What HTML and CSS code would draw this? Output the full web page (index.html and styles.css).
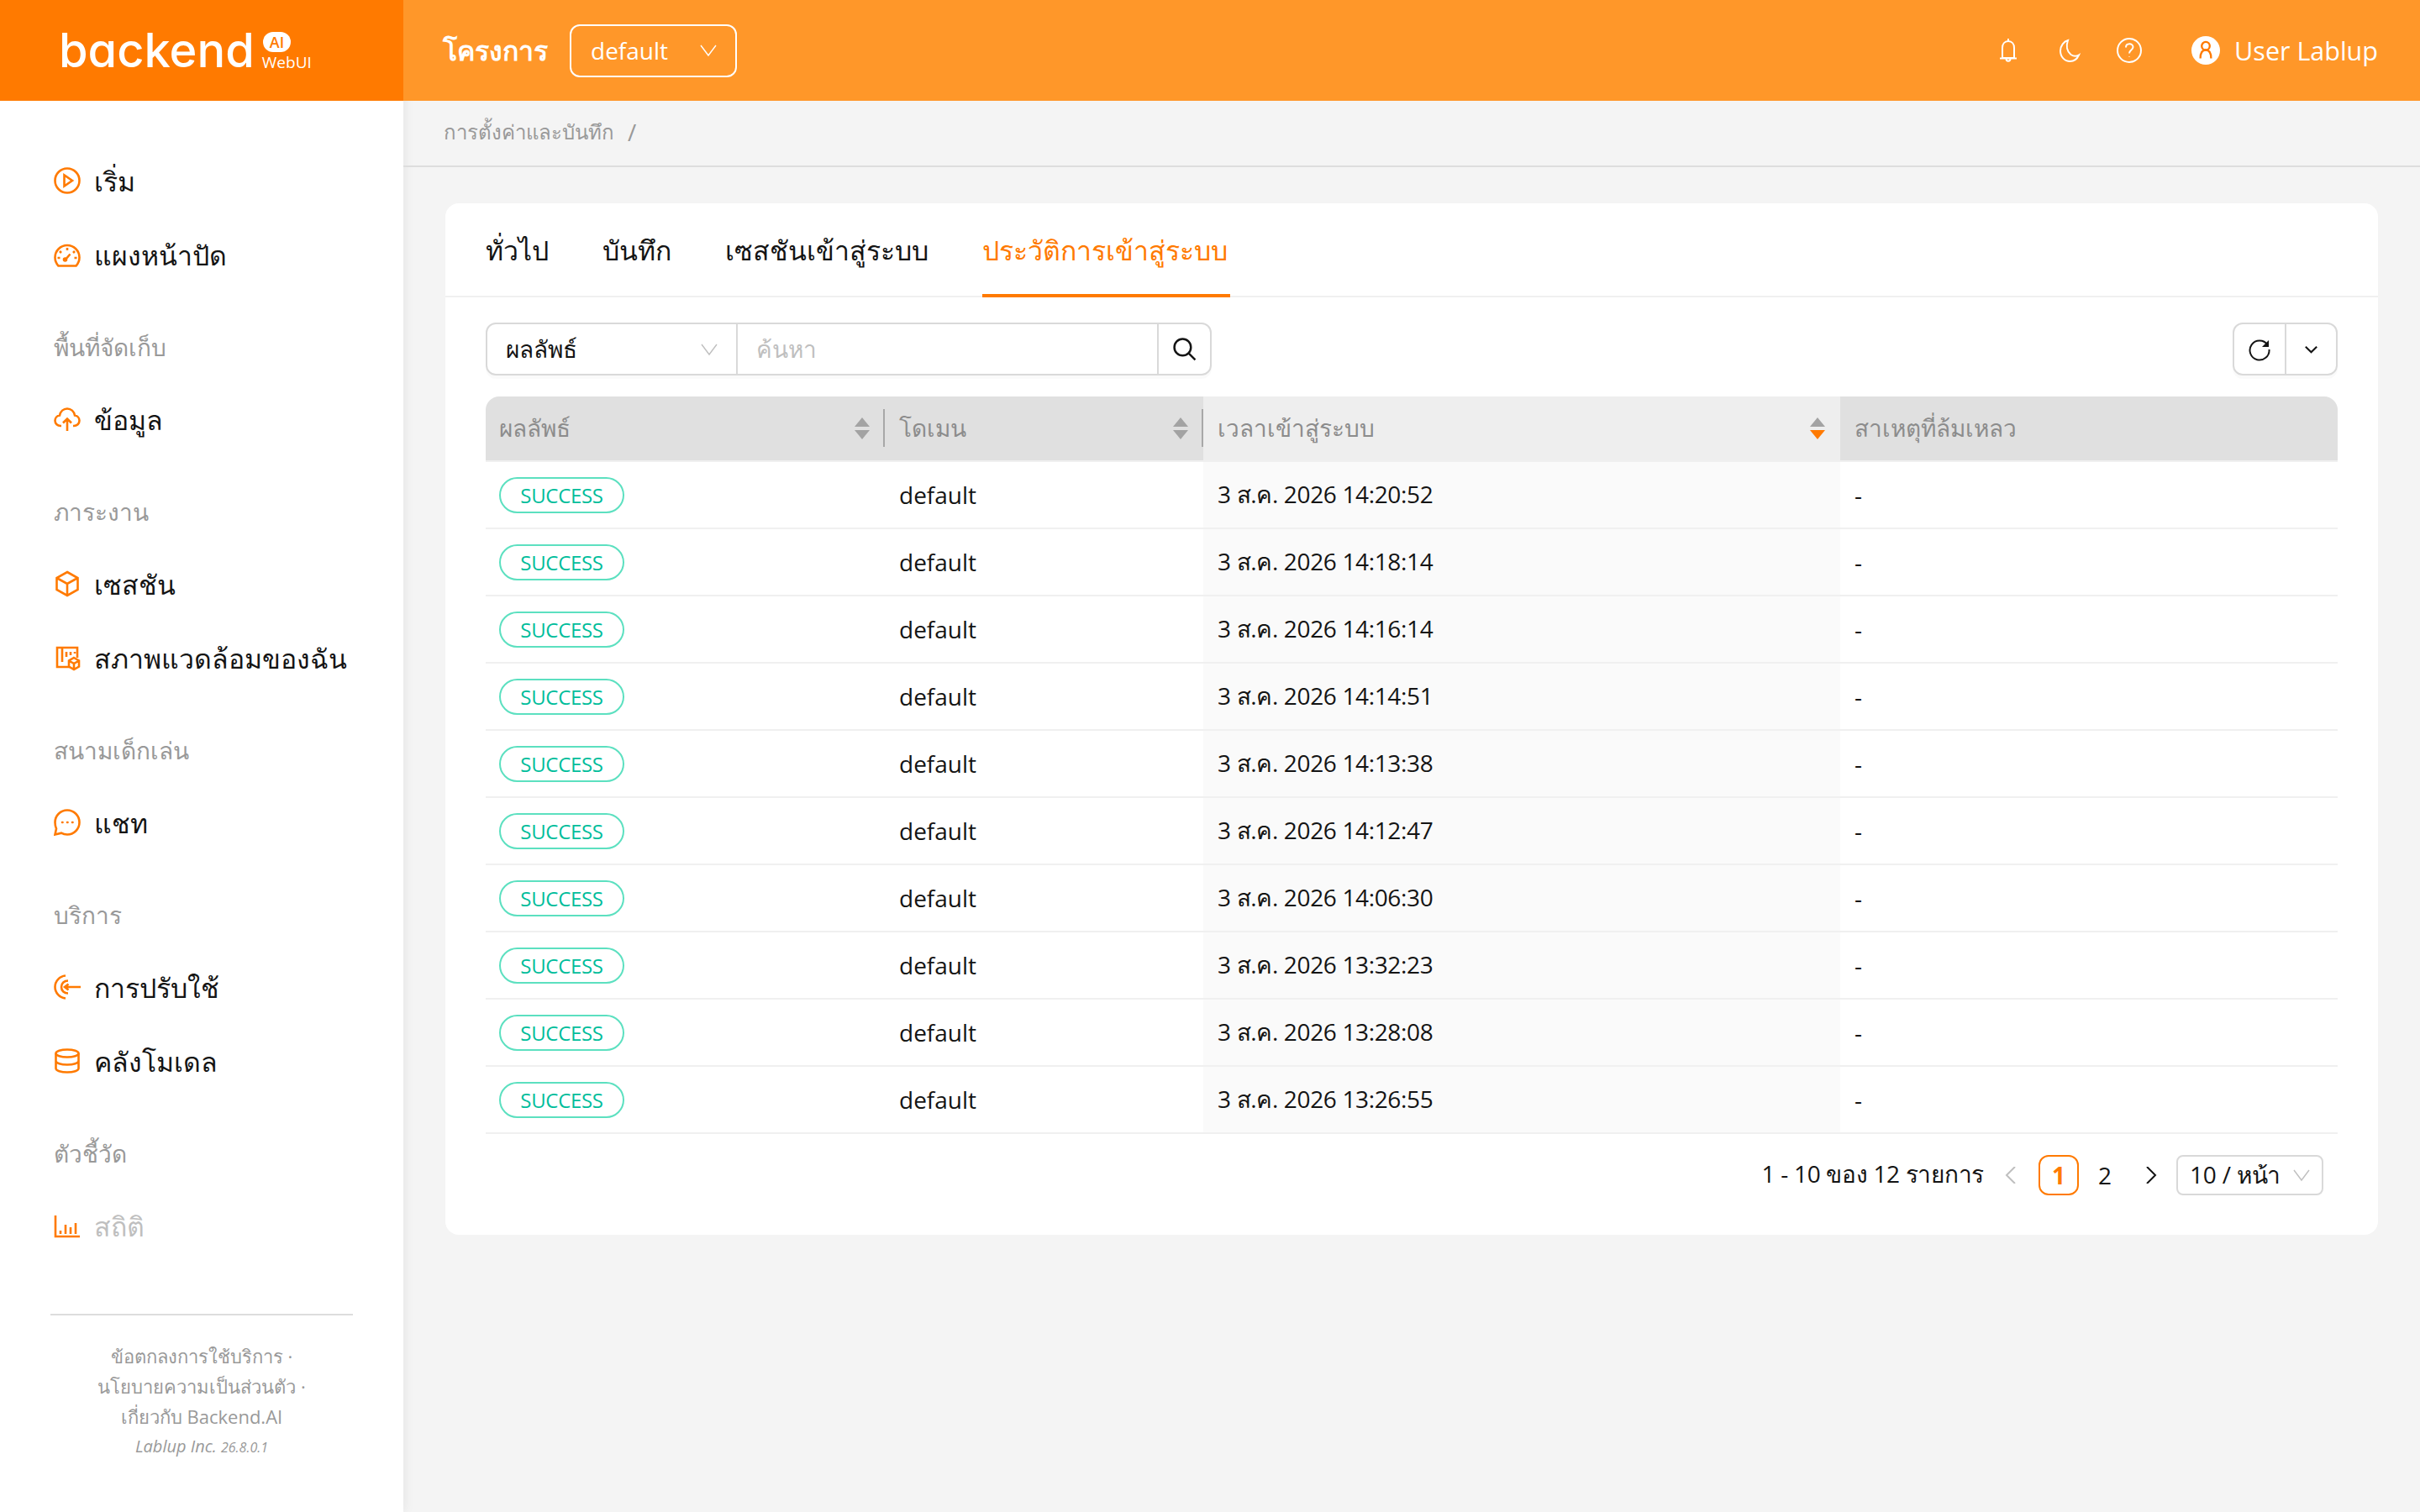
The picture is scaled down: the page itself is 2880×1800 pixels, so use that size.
FILE: index.html
```html
<!DOCTYPE html>
<html lang="th">
<head>
    <meta charset="UTF-8">
    <title>Backend.AI WebUI</title>
    <link rel="stylesheet" href="styles.css">
</head>
<body>
    <div class="layout">
        <aside class="sidebar">
            <div class="logo">
                <span class="logo-word">backend</span>
                <span class="logo-side">
                    <span class="logo-ai">AI</span>
                    <span class="logo-webui">WebUI</span>
                </span>
            </div>
            <nav class="menu">
                <a class="menu-item">
                    <svg class="menu-icon" viewBox="0 0 32 32"><circle cx="16" cy="16" r="14.5"/><path d="M12.5 9.5v13l9.5-6.5z"/></svg>
                    เริ่ม
                </a>
                <a class="menu-item">
                    <svg class="menu-icon" viewBox="0 0 32 32"><path d="M5.500 29.500C3 26.800 1.500 23.500 1.500 19.500 1.500 11.500 8 5 16 5s14.500 6.500 14.500 14.500c0 4-1.500 7.300-4 10zM16 8v3M7 12l2 2M25 12l-2 2M4.500 20h3M24.500 20h3M13.500 22.500l6-7"/><circle cx="13.500" cy="22" r="1.500"/></svg>
                    แผงหน้าปัด
                </a>
                <div class="menu-group">พื้นที่จัดเก็บ</div>
                <a class="menu-item">
                    <svg class="menu-icon" viewBox="0 0 32 32"><path d="M9 24H8C4.500 24 1.500 21.300 1.500 17.800c0-3.300 2.500-6 5.500-6.300C8 7 11.500 3.500 16 3.500S24 7 25 11.500c3 .3 5.500 3 5.500 6.300 0 3.500-3 6.200-6.500 6.200h-1M16 30V16M11 20.500l5-5 5 5"/></svg>
                    ข้อมูล
                </a>
                <div class="menu-group">ภาระงาน</div>
                <a class="menu-item">
                    <svg class="menu-icon" viewBox="0 0 32 32"><path d="M16 2l12.500 7v14L16 30 3.500 23V9zM3.500 9L16 16l12.500-7M16 16v14"/></svg>
                    เซสชัน
                </a>
                <a class="menu-item">
                    <svg class="menu-icon" viewBox="0 0 32 32"><path d="M19 27H4V4h24v12M10 4v17M15 9v6M20 9v4M25 9v2"/><path d="M24 16l6 3.500v7L24 30l-6-3.500v-7zM18 19.500l6 3.500 6-3.500M24 23v7"/></svg>
                    สภาพแวดล้อมของฉัน
                </a>
                <div class="menu-group">สนามเด็กเล่น</div>
                <a class="menu-item">
                    <svg class="menu-icon" viewBox="0 0 32 32"><path d="M16 1.500c8 0 14.500 6.500 14.500 14.500S24 30.500 16 30.500c-2.500 0-5-.6-7-1.800l-7.500 1.800 1.500-7C2 21 1.500 18.500 1.500 16 1.500 8 8 1.500 16 1.500z"/><path class="icon-dots" d="M10 16h.5M16 16h.5M22 16h.5"/></svg>
                    แชท
                </a>
                <div class="menu-group">บริการ</div>
                <a class="menu-item">
                    <svg class="menu-icon" viewBox="0 0 32 32"><path d="M14 2.500C7 3 1.500 9 1.500 16S7 29 14 29.500M17 8.500c-4.500 0-8 3-8 7.500s3.500 7.500 8 7.500M32 16H13M17.500 12.500L13 16l4.500 3.500"/></svg>
                    การปรับใช้
                </a>
                <a class="menu-item">
                    <svg class="menu-icon" viewBox="0 0 32 32"><ellipse cx="16" cy="7" rx="13.500" ry="4.500"/><path d="M2.500 7v18c0 2.500 6 4.500 13.500 4.500s13.500-2 13.500-4.500V7M2.500 16c0 2.500 6 4.500 13.500 4.500s13.500-2 13.500-4.500"/></svg>
                    คลังโมเดล
                </a>
                <div class="menu-group">ตัวชี้วัด</div>
                <a class="menu-item menu-item-disabled">
                    <svg class="menu-icon" viewBox="0 0 32 32"><path d="M2 4v25h29M8 22v4M14 15v11M20 18v8M26 13v13"/></svg>
                    สถิติ
                </a>
            </nav>
            <footer class="side-footer">
                <div>ข้อตกลงการใช้บริการ ·</div>
                <div>นโยบายความเป็นส่วนตัว ·</div>
                <div>เกี่ยวกับ Backend.AI</div>
                <div class="side-version"><em>Lablup Inc.</em> <em class="side-build">26.8.0.1</em></div>
            </footer>
        </aside>

        <div class="main">
            <header class="topbar">
                <span class="project-label">โครงการ</span>
                <div class="project-select">
                    default
                    <svg class="chevron" viewBox="0 0 20 20"><path d="M1 4l9 12 9-12"/></svg>
                </div>
                <div class="topbar-right">
                    <svg class="top-icon" viewBox="0 0 32 32"><path d="M16 2v3M16 5c-4.500 0-7 3.500-7 8v12h14V13c0-4.500-2.500-8-7-8zM6 25.500h20M13.500 26c0 3.500 5 3.500 5 0"/></svg>
                    <svg class="top-icon" viewBox="0 0 32 32"><path d="M15 4C10 5.500 6 10.500 6 16.500 6 23.500 11 29 17.500 29c4.500 0 8.500-3 10.500-7.500-2.500 1.500-6.500 1.500-9.500-.5-4.500-3.500-6-10-3.500-17z"/></svg>
                    <svg class="top-icon" viewBox="0 0 32 32"><circle cx="16" cy="16" r="14"/><path d="M12 12.500c0-5.500 8.500-5.500 8.500-.5 0 3.500-4.500 3.500-4.500 7.500M16 23.500v.5"/></svg>
                    <div class="user">
                        <span class="avatar">
                            <svg viewBox="0 0 32 32"><circle cx="16" cy="11" r="4.500"/><path d="M10 25c0-6 2-9.500 6-9.500s6 3.500 6 9.500"/></svg>
                        </span>
                        User Lablup
                    </div>
                </div>
            </header>

            <div class="breadcrumb">การตั้งค่าและบันทึก <span class="breadcrumb-sep">/</span></div>

            <section class="card">
                <div class="tabs">
                    <a class="tab">ทั่วไป</a>
                    <a class="tab">บันทึก</a>
                    <a class="tab">เซสชันเข้าสู่ระบบ</a>
                    <a class="tab tab-active">ประวัติการเข้าสู่ระบบ</a>
                </div>

                <div class="card-body">
                    <div class="toolbar">
                        <div class="search-group">
                            <div class="search-field">
                                ผลลัพธ์
                                <svg class="chevron chevron-muted" viewBox="0 0 20 20"><path d="M1 4l9 12 9-12"/></svg>
                            </div>
                            <div class="search-input">ค้นหา</div>
                            <div class="search-btn">
                                <svg viewBox="0 0 28 28"><circle cx="12" cy="12" r="9.500"/><path d="M19 19l7.500 7.500"/></svg>
                            </div>
                        </div>
                        <div class="refresh-group">
                            <div class="refresh-btn">
                                <svg viewBox="0 0 28 28"><path d="M23.500 8.500A11.500 11.500 0 1 0 25.500 14"/><path class="icon-solid" d="M25 3v8h-8z"/></svg>
                            </div>
                            <div class="refresh-more">
                                <svg viewBox="0 0 20 20"><path d="M3 7l7 7 7-7"/></svg>
                            </div>
                        </div>
                    </div>

                    <table class="log-table">
                        <colgroup>
                            <col class="col-result">
                            <col class="col-domain">
                            <col class="col-time">
                            <col>
                        </colgroup>
                        <thead>
                            <tr>
                                <th>ผลลัพธ์<span class="sorter"><i class="up"></i><i class="down"></i></span></th>
                                <th>โดเมน<span class="sorter"><i class="up"></i><i class="down"></i></span></th>
                                <th class="sorted">เวลาเข้าสู่ระบบ<span class="sorter"><i class="up"></i><i class="down down-active"></i></span></th>
                                <th>สาเหตุที่ล้มเหลว</th>
                            </tr>
                        </thead>
                        <tbody>
                            <tr><td><span class="tag">SUCCESS</span></td><td>default</td><td class="sorted">3 ส.ค. 2026 14:20:52</td><td>-</td></tr>
                            <tr><td><span class="tag">SUCCESS</span></td><td>default</td><td class="sorted">3 ส.ค. 2026 14:18:14</td><td>-</td></tr>
                            <tr><td><span class="tag">SUCCESS</span></td><td>default</td><td class="sorted">3 ส.ค. 2026 14:16:14</td><td>-</td></tr>
                            <tr><td><span class="tag">SUCCESS</span></td><td>default</td><td class="sorted">3 ส.ค. 2026 14:14:51</td><td>-</td></tr>
                            <tr><td><span class="tag">SUCCESS</span></td><td>default</td><td class="sorted">3 ส.ค. 2026 14:13:38</td><td>-</td></tr>
                            <tr><td><span class="tag">SUCCESS</span></td><td>default</td><td class="sorted">3 ส.ค. 2026 14:12:47</td><td>-</td></tr>
                            <tr><td><span class="tag">SUCCESS</span></td><td>default</td><td class="sorted">3 ส.ค. 2026 14:06:30</td><td>-</td></tr>
                            <tr><td><span class="tag">SUCCESS</span></td><td>default</td><td class="sorted">3 ส.ค. 2026 13:32:23</td><td>-</td></tr>
                            <tr><td><span class="tag">SUCCESS</span></td><td>default</td><td class="sorted">3 ส.ค. 2026 13:28:08</td><td>-</td></tr>
                            <tr><td><span class="tag">SUCCESS</span></td><td>default</td><td class="sorted">3 ส.ค. 2026 13:26:55</td><td>-</td></tr>
                        </tbody>
                    </table>

                    <div class="pagination">
                        <span class="page-total">1 - 10 ของ 12 รายการ</span>
                        <svg class="page-arrow page-arrow-off" viewBox="0 0 20 20"><path d="M15 0L5 10l10 10"/></svg>
                        <span class="page page-active">1</span>
                        <span class="page">2</span>
                        <svg class="page-arrow" viewBox="0 0 20 20"><path d="M5 0l10 10L5 20"/></svg>
                        <div class="page-size">
                            10 / หน้า
                            <svg class="chevron chevron-muted" viewBox="0 0 20 20"><path d="M1 4l9 12 9-12"/></svg>
                        </div>
                    </div>
                </div>
            </section>
        </div>
    </div>
</body>
</html>
```

FILE: styles.css
```css
* {
    box-sizing: border-box;
}

body {
    margin: 0;
    font-family: 'Open Sans', 'Noto Sans', sans-serif;
    font-size: 28px;
    color: #141414;
    background: #f4f4f4;
}

.layout {
    display: flex;
    min-height: 1800px;
}

/* sidebar */
.sidebar {
    width: 480px;
    flex-shrink: 0;
    display: flex;
    flex-direction: column;
    background: white;
    box-shadow: 2px 0 12px rgba(0,0,0,0.06);
}

.logo {
    height: 120px;
    padding-left: 70px;
    display: flex;
    align-items: center;
    gap: 9px;
    background: #ff7a00;
    color: white;
}

.logo-word {
    font-family: 'Inter', sans-serif;
    font-feature-settings: "cv11";
    font-size: 56px;
    font-weight: 500;
    letter-spacing: 0;
}

.logo-side {
    display: flex;
    flex-direction: column;
    align-items: flex-start;
    gap: 1px;
    padding-top: 2px;
}

.logo-ai {
    background: white;
    color: #ff7a00;
    border-radius: 12px;
    padding: 0 8px;
    font-size: 18px;
    line-height: 24px;
    font-weight: 600;
    margin-left: 1px;
}

.logo-webui {
    font-size: 19px;
    line-height: 22px;
}

.menu {
    padding-top: 55px;
}

.menu-item {
    height: 80px;
    margin-bottom: 8px;
    padding: 2px 0 0 64px;
    display: flex;
    align-items: center;
    gap: 16px;
    font-size: 32px;
}

.menu-item-disabled {
    color: #bfbfbf;
}

.menu-icon {
    width: 32px;
    height: 32px;
    margin-top: -2px;
    fill: none;
    stroke: #ff7a00;
    stroke-width: 2.6;
}

.icon-dots {
    stroke-linecap: round;
}

.menu-group {
    height: 108px;
    padding: 42px 0 26px 64px;
    line-height: 40px;
    font-size: 28px;
    color: #999;
}

.side-footer {
    margin: auto 60px 0;
    padding: 30px 0 59px;
    border-top: 2px solid #ddd;
    text-align: center;
    font-size: 22px;
    line-height: 36px;
    color: #999;
}

.side-version {
    font-size: 20px;
}

.side-build {
    font-size: 16px;
}

/* top bar */
.main {
    flex: 1;
    min-width: 0;
}

.topbar {
    height: 120px;
    padding: 0 50px 0 47px;
    display: flex;
    align-items: center;
    background: #ff9729;
    color: white;
}

.project-label {
    font-size: 32px;
    font-weight: 600;
}

.project-select {
    width: 199px;
    height: 63px;
    margin-left: 26px;
    padding: 0 22px 0 23px;
    display: flex;
    align-items: center;
    justify-content: space-between;
    border: 2px solid white;
    border-radius: 12px;
    font-size: 28px;
}

.chevron {
    width: 20px;
    height: 20px;
    fill: none;
    stroke: white;
    stroke-width: 1.4;
}

.chevron-muted {
    stroke: #bfbfbf;
}

.topbar-right {
    margin-left: auto;
    display: flex;
    align-items: center;
    gap: 40px;
}

.top-icon {
    width: 32px;
    height: 32px;
    fill: none;
    stroke: white;
    stroke-width: 2;
}

.user {
    margin-left: 18px;
    display: flex;
    align-items: center;
    gap: 17px;
    font-size: 30.5px;
}

.avatar {
    width: 34px;
    height: 34px;
    display: flex;
    border-radius: 50%;
    background: white;
}

.avatar svg {
    fill: none;
    stroke: #ff7a00;
    stroke-width: 2.2;
}

.breadcrumb {
    height: 79px;
    padding: 0 0 3px 48px;
    display: flex;
    align-items: center;
    border-bottom: 2px solid #ddd;
    font-size: 24px;
    color: #999;
}

.breadcrumb-sep {
    margin-left: 16px;
    font-size: 28px;
}

/* card */
.card {
    margin: 43px 50px 0;
    height: 1228px;
    background: white;
    border-radius: 16px;
}

.tabs {
    height: 112px;
    padding-left: 48px;
    display: flex;
    gap: 64px;
    border-bottom: 2px solid #f0f0f0;
}

.tab {
    height: 112px;
    display: flex;
    align-items: center;
    font-size: 32px;
}

.tab-active {
    padding-right: 3px;
    color: #ff7a00;
    border-top: 4px solid transparent;
    border-bottom: 4px solid #ff7a00;
}

.card-body {
    padding: 30px 48px 0;
}

.toolbar {
    display: flex;
    justify-content: space-between;
    margin-bottom: 25px;
}

.search-group, .refresh-group {
    height: 63px;
    display: flex;
    border: 2px solid #d9d9d9;
    border-radius: 12px;
    box-shadow: 0 4px 0 rgba(0,0,0,0.02);
}

.search-group {
    width: 864px;
}

.search-field {
    width: 298px;
    padding: 0 22px 0 22px;
    display: flex;
    align-items: center;
    justify-content: space-between;
    border-right: 2px solid #d9d9d9;
}

.search-input {
    flex: 1;
    padding-left: 22px;
    display: flex;
    align-items: center;
    color: #bfbfbf;
}

.search-btn {
    width: 63px;
    padding: 0 16px;
    display: flex;
    align-items: center;
    border-left: 2px solid #d9d9d9;
}

.search-btn svg {
    fill: none;
    stroke: #141414;
    stroke-width: 2.4;
}

.refresh-group {
    width: 125px;
}

.refresh-btn {
    width: 62px;
    padding: 0 16px;
    display: flex;
    align-items: center;
    border-right: 2px solid #d9d9d9;
}

.refresh-btn svg {
    fill: none;
    stroke: #141414;
    stroke-width: 2;
}

.refresh-btn .icon-solid {
    fill: #141414;
    stroke: none;
}

.refresh-more {
    flex: 1;
    padding: 0 20px;
    display: flex;
    align-items: center;
}

.refresh-more svg {
    fill: none;
    stroke: #141414;
    stroke-width: 2.2;
}

/* table */
.log-table {
    width: 100%;
    table-layout: fixed;
    border-collapse: separate;
    border-spacing: 0;
}

.col-result {
    width: 475px;
}

.col-domain {
    width: 379px;
}

.col-time {
    width: 758px;
}

.log-table th {
    position: relative;
    height: 78px;
    padding: 0 16px;
    background: #e0e0e0;
    border-bottom: 2px solid #f0f0f0;
    text-align: left;
    font-weight: 400;
    color: #8c8c8c;
}

.log-table th + th, .log-table td + td {
    padding-left: 17px;
}

.log-table th:first-child {
    border-top-left-radius: 16px;
}

.log-table th:last-child {
    border-top-right-radius: 16px;
}

.log-table th + th::before {
    content: "";
    position: absolute;
    left: -2px;
    top: 15px;
    width: 2px;
    height: 45px;
    background: #a8a8a8;
}

.log-table th:last-child::before {
    display: none;
}

.log-table th.sorted {
    background: #eeeeee;
}

.log-table td {
    height: 80px;
    padding: 0 16px;
    border-bottom: 2px solid #f0f0f0;
}

.log-table td.sorted {
    background: #fafafa;
    letter-spacing: -0.35px;
}

.sorter {
    position: absolute;
    right: 18px;
    top: 25px;
    display: flex;
    flex-direction: column;
    gap: 4px;
}

.sorter i {
    width: 18px;
    height: 11px;
    background: #a3a3a3;
}

.sorter .up {
    clip-path: polygon(50% 0, 100% 100%, 0 100%);
}

.sorter .down {
    clip-path: polygon(0 0, 100% 0, 50% 100%);
}

.sorter .down-active {
    background: #ff7a00;
}

.tag {
    height: 43px;
    width: 149px;
    display: inline-flex;
    align-items: center;
    justify-content: center;
    vertical-align: middle;
    border: 2px solid #5ce0c0;
    border-radius: 22px;
    font-size: 24px;
    letter-spacing: -0.3px;
    color: #00bd9b;
}

/* pagination */
.pagination {
    margin-top: 25px;
    padding-right: 17px;
    display: flex;
    align-items: center;
    justify-content: flex-end;
    height: 48px;
}

.page-total {
    margin-right: 22px;
    padding-bottom: 2px;
    letter-spacing: -0.3px;
}

.page-arrow {
    width: 20px;
    height: 20px;
    fill: none;
    stroke: #141414;
    stroke-width: 2;
}

.page-arrow-off {
    stroke: #bfbfbf;
}

.page {
    width: 48px;
    height: 48px;
    margin-left: 7px;
    display: flex;
    align-items: center;
    justify-content: center;
}

.page-active {
    margin-left: 23px;
    border: 2px solid #ff7a00;
    border-radius: 12px;
    color: #ff7a00;
    font-weight: 700;
}

.page + .page-arrow {
    margin-left: 21px;
}

.page-size {
    width: 175px;
    height: 48px;
    margin-left: 20px;
    padding: 0 14px;
    display: flex;
    align-items: center;
    justify-content: space-between;
    border: 2px solid #d9d9d9;
    border-radius: 8px;
    letter-spacing: -0.2px;
}
```
